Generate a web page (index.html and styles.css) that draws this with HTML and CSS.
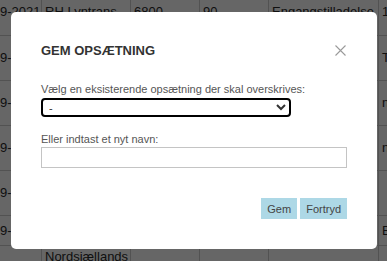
FILE: index.html
```html
<!DOCTYPE html>
<html lang="da">
<head>
  <meta charset="UTF-8">
  <title>Gem opsætning</title>
  <link rel="stylesheet" href="styles.css">
</head>
<body>

<table class="grid">
  <tbody>
    <tr class="first">
      <td>9-2021</td><td>RH Lyntrans</td><td>6800</td><td>90</td><td>Engangstilladelse</td><td>1</td>
    </tr>
    <tr><td>9-2021</td><td></td><td></td><td></td><td></td><td>T</td></tr>
    <tr><td>9-2021</td><td></td><td></td><td></td><td></td><td>n</td></tr>
    <tr><td>9-2021</td><td></td><td></td><td></td><td></td><td>n</td></tr>
    <tr><td>9-2021</td><td></td><td></td><td></td><td></td><td></td></tr>
    <tr class="short"><td>9-2021</td><td></td><td></td><td></td><td></td><td>B</td></tr>
    <tr class="last"><td></td><td>Nordsjællands</td><td></td><td></td><td></td><td></td></tr>
  </tbody>
</table>

<div class="overlay"></div>

<div class="modal">
  <div class="modal-head">
    <h2>GEM OPSÆTNING</h2>
    <span class="close">
      <svg width="11" height="11" viewBox="0 0 11 11"><path d="M0.5 0.5 L10.5 10.5 M10.5 0.5 L0.5 10.5" stroke="#9a9a9a" stroke-width="1.1" fill="none"/></svg>
    </span>
  </div>

  <label class="field-label" for="existing">Vælg en eksisterende opsætning der skal overskrives:</label>
  <select id="existing" class="picker">
    <option>-</option>
  </select>

  <label class="field-label second" for="newname">Eller indtast et nyt navn:</label>
  <input type="text" id="newname" class="name-input">

  <div class="actions">
    <button class="btn">Gem</button>
    <button class="btn">Fortryd</button>
  </div>
</div>

</body>
</html>
```

FILE: styles.css
```css
body { margin: 0; font-family: "Liberation Sans", Arial, sans-serif; overflow: hidden; background: #fff; }

.grid { border-collapse: collapse; table-layout: fixed; width: 387px; font-size: 13px; color: #2a2a2a; }
.grid tr { height: 45px; }
.grid td { border: 1px solid #ccc; padding: 0 3px; white-space: nowrap; overflow: hidden; vertical-align: middle; }
.grid td:first-child { border-left: none; padding: 0 4px 0 0; text-align: right; }
.grid td:nth-child(1) { width: 37px; }
.grid td:nth-child(2) { width: 82px; }
.grid td:nth-child(3) { width: 62px; }
.grid td:nth-child(4) { width: 62px; }
.grid td:nth-child(5) { width: 103px; }
.grid td:nth-child(6) { border-right: none; }
.grid tr.first { height: 35px; }
.grid tr.first td { border-top: none; vertical-align: top; padding-top: 4px; }
.grid tr.short { height: 30px; }
.grid tr.last { height: 30px; }
.grid tr.last td { vertical-align: top; padding-top: 3px; border-bottom: none; }

.overlay { position: absolute; inset: 0; background: rgba(0, 0, 0, 0.6); }

.modal { position: absolute; left: 11px; top: 12px; width: 306px; height: 177px; padding: 30px; background: #fff; border-radius: 5px; display: flex; flex-direction: column; }
.modal-head { display: flex; justify-content: space-between; align-items: center; height: 16px; }
.modal-head h2 { margin: 0; font-size: 13px; font-weight: bold; color: #333; }
.close { display: flex; margin-right: 1px; }

.field-label { display: block; font-size: 11px; color: #555; margin-top: 25px; line-height: 13px; }
.field-label.second { margin-top: 16px; }

.picker { width: 250px; height: 19px; margin-top: 2px; border: 2px solid #000; border-radius: 4px; background: #fff; font-family: inherit; font-size: 11px; color: #333; padding: 0 2px; }
.name-input { width: 306px; height: 21px; box-sizing: border-box; margin-top: 1px; border: 1px solid #c4c4c4; padding: 0 4px; font-family: inherit; font-size: 11px; }

.actions { display: flex; justify-content: flex-end; gap: 3px; margin-top: 30px; }
.btn { background: #add8e6; border: none; height: 21px; padding: 0 6px; font-family: inherit; font-size: 11px; color: #444; }
```
